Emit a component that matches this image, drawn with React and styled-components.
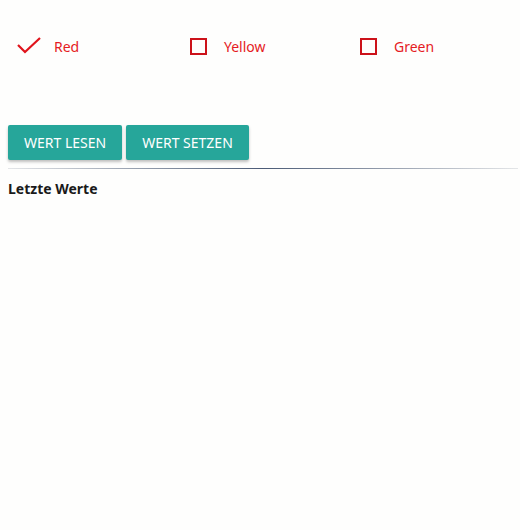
import React, { useState } from 'react';
import styled, { createGlobalStyle } from 'styled-components';

const GlobalStyle = createGlobalStyle`
body {
  margin: 0;
  background: #fefefd;
  font-family: "Noto Sans", "Open Sans", sans-serif;
}
`

const Page = styled.div`
padding: 0 2px 0 8px;
`

const CheckRow = styled.div`
display: flex;
flex-direction: row;
margin-top: 28px;
height: 36px;
align-items: center;
`

const CheckItem = styled.label`
display: flex;
align-items: center;
width: 170px;
cursor: pointer;
`

const IconBox = styled.span`
display: inline-flex;
align-items: center;
justify-content: flex-start;
width: 46px;
height: 24px;
padding-left: 9px;
box-sizing: border-box;
`

const EmptyBox = styled.span`
display: inline-block;
width: 17px;
height: 17px;
box-sizing: border-box;
border: 2px solid #cc121a;
margin-left: 3px;
`

const CheckLabel = styled.span`
color: #e51b24;
font-size: 14px;
`

const ButtonRow = styled.div`
display: flex;
gap: 4px;
margin-top: 61px;
`

const ActionButton = styled.button`
height: 35px;
padding: 0 16px;
border: none;
border-radius: 2px;
background: #26a69a;
color: #fff;
font-family: "Noto Sans", "Open Sans", sans-serif;
font-size: 14px;
font-weight: 400;
box-shadow: 0 2px 3px rgba(0, 0, 0, 0.25);
cursor: pointer;
`

const Divider = styled.hr`
border: 0;
height: 1px;
margin: 8px 0 0;
background-image: linear-gradient(to right, #e4e6e8, #4b5b76 50%, #e4e6e8);
`

const SectionTitle = styled.div`
font-weight: bold;
font-size: 14px;
color: #1a1a1a;
margin-top: 10px;
`

function Check () {
  return <svg width="24" height="18" viewBox="0 0 24 18">
    <polyline points="1,8 8,15 23,1" fill="none" stroke="#e0141c" strokeWidth="2.2" />
  </svg>
}

export default function App () {
  const [checked] = useState({ Red: true, Yellow: false, Green: false })

  return <Page>
    <GlobalStyle />
    <CheckRow>
      {['Red', 'Yellow', 'Green'].map(name => (
        <CheckItem key={name}>
          <IconBox>{checked[name] ? <Check /> : <EmptyBox />}</IconBox>
          <CheckLabel>{name}</CheckLabel>
        </CheckItem>
      ))}
    </CheckRow>
    <ButtonRow>
      <ActionButton>WERT LESEN</ActionButton>
      <ActionButton>WERT SETZEN</ActionButton>
    </ButtonRow>
    <Divider />
    <SectionTitle>Letzte Werte</SectionTitle>
  </Page>
}
